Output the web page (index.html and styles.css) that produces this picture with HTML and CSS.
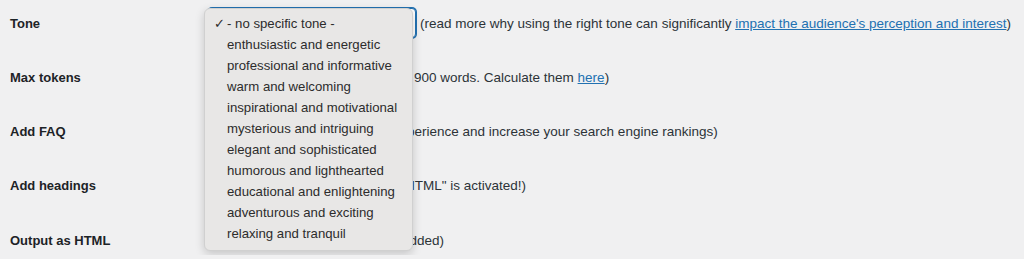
FILE: index.html
```html
<!DOCTYPE html>
<html lang="en">
<head>
    <meta charset="UTF-8">
    <meta name="viewport" content="width=device-width, initial-scale=1.0">
    <title>Article settings</title>
    <link rel="stylesheet" href="styles.css">
</head>
<body>
    <div class="settings">
        <div class="row">
            <div class="label">Tone</div>
            <div class="field">
                <div class="select-wrap">
                    <div class="select"></div>
                    <ul class="menu">
                        <li class="checked">- no specific tone -</li>
                        <li>enthusiastic and energetic</li>
                        <li>professional and informative</li>
                        <li>warm and welcoming</li>
                        <li>inspirational and motivational</li>
                        <li>mysterious and intriguing</li>
                        <li>elegant and sophisticated</li>
                        <li>humorous and lighthearted</li>
                        <li>educational and enlightening</li>
                        <li>adventurous and exciting</li>
                        <li>relaxing and tranquil</li>
                    </ul>
                </div>
                <span class="desc">(read more why using the right tone can significantly <a href="#">impact the audience's perception and interest</a>)</span>
            </div>
        </div>
        <div class="row">
            <div class="label">Max tokens</div>
            <div class="field">
                <div class="control"><input class="input" type="number" value="1200"></div>
                <span class="desc tokens">900 words. Calculate them <a href="#">here</a>)</span>
            </div>
        </div>
        <div class="row">
            <div class="label">Add FAQ</div>
            <div class="field">
                <div class="control"><input class="check" type="checkbox"></div>
                <span class="desc faq">perience and increase your search engine rankings)</span>
            </div>
        </div>
        <div class="row">
            <div class="label">Add headings</div>
            <div class="field">
                <div class="control"><input class="check" type="checkbox"></div>
                <span class="desc headings">HTML" is activated!)</span>
            </div>
        </div>
        <div class="row">
            <div class="label">Output as HTML</div>
            <div class="field">
                <div class="control"><input class="check" type="checkbox"></div>
                <span class="desc html">added)</span>
            </div>
        </div>
    </div>
</body>
</html>
```

FILE: styles.css
```css
body {
    background-color: #f0f0f1;
    color: #1d2327;
    font-family: "Liberation Sans", Arial, sans-serif;
    font-size: 13px;
    margin: 0;
    padding: 8px 0 0 10px;
    overflow: hidden;
}
.settings {
    display: flex;
    flex-direction: column;
    gap: 24.25px;
}
.row {
    display: flex;
    align-items: center;
    height: 30px;
}
.label {
    width: 198px;
    flex-shrink: 0;
    font-weight: bold;
}
.field {
    display: flex;
    align-items: center;
    white-space: nowrap;
}
.desc {
    font-size: 13.5px;
    color: #2c3338;
}
.desc a {
    color: #2271b1;
}
.select-wrap {
    position: relative;
    margin-right: 4px;
}
.select {
    width: 206px;
    height: 28px;
    border: 1px solid #2271b1;
    border-radius: 4px;
    box-shadow: 0 0 0 1px #2271b1;
    background: #fff;
}
.menu {
    position: absolute;
    top: 0;
    left: -4px;
    z-index: 5;
    width: 207px;
    margin: 0;
    padding: 4px 0 6px;
    list-style: none;
    background: #e8e7e6;
    border: 1px solid #d0d0d0;
    border-radius: 6px;
    box-shadow: 0 3px 10px rgba(0, 0, 0, 0.18);
    color: #2c2c2c;
    font-size: 13.2px;
}
.menu li {
    height: 21px;
    line-height: 21px;
    padding-left: 22px;
}
.menu li.checked::before {
    content: "\2713";
    display: inline-block;
    width: 13px;
    margin-left: -13px;
}
.control {
    width: 190px;
    display: flex;
    align-items: center;
}
.input {
    width: 80px;
    height: 28px;
    box-sizing: border-box;
    border: 1px solid #8c8f94;
    border-radius: 4px;
}
.check {
    width: 16px;
    height: 16px;
    margin: 0;
}
.tokens {
    margin-left: 16px;
}
.faq {
    margin-left: 9px;
}
.headings {
    margin-left: 7px;
}
.html {
    margin-left: 4px;
}
```
